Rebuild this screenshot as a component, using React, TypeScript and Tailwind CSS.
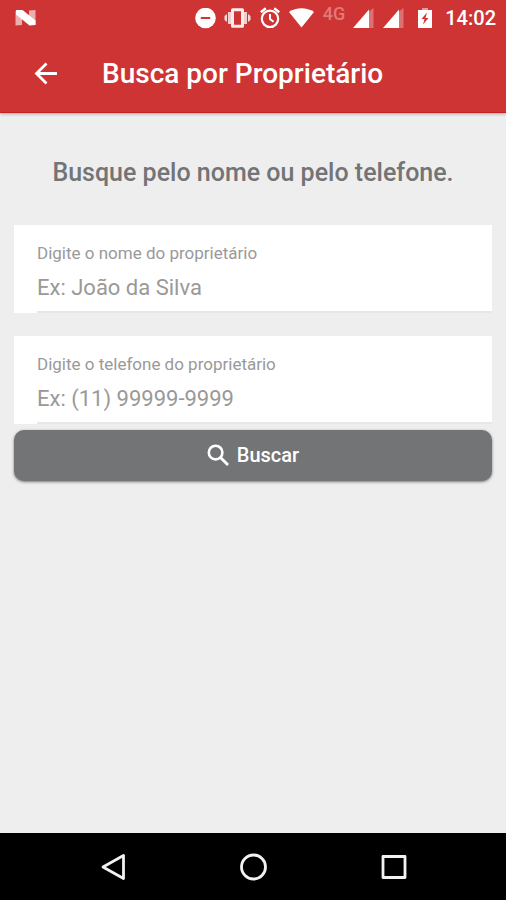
import type { ReactNode } from "react";

function StatusBar() {
  return (
    <div className="flex h-9 items-center justify-between pr-[10px] pl-[15px] text-white">
      <svg width="21" height="16" viewBox="0 0 21 16" aria-hidden="true">
        <path d="M0.5 1L7 1V15L0.5 15.5ZM14 0.5L20.5 0V15L14 13Z" fill="#fff" opacity=".6" />
        <path d="M1 0H7.5L20.5 10.5V15L14.5 15.5L1 4.5Z" fill="#fff" />
      </svg>
      <div className="flex items-center gap-2">
        <svg width="21" height="21" viewBox="0 0 21 21" aria-hidden="true">
          <circle cx="10.5" cy="10" r="10.3" fill="#fff" />
          <path d="M6.5 10H14.5" stroke="#cf3434" strokeWidth="1.8" strokeLinecap="round" />
        </svg>
        <svg width="28" height="21" viewBox="0 0 28 21" aria-hidden="true">
          <path d="M4 4H7V16H4ZM20 4H23V16H20Z" fill="#fff" opacity=".75" />
          <path d="M0.5 8L3 6V14L0.5 12ZM26.5 8L24 6V14L26.5 12Z" fill="#fff" opacity=".8" />
          <path d="M8.5 1.8H18.5V18.2H8.5Z" fill="none" stroke="#fff" strokeOpacity=".9" strokeWidth="3" strokeLinejoin="round" />
        </svg>
        <svg width="21" height="22" viewBox="0 0 21 22" fill="none" stroke="#fff" aria-hidden="true">
          <circle cx="10" cy="11.8" r="8.2" strokeWidth="2.2" />
          <path d="M10 7V12L13.5 14.8" strokeWidth="2" />
          <path d="M0.8 5.2L5.8 1.2M19.2 5.2L14.2 1.2" strokeWidth="2.4" />
        </svg>
        <svg width="26" height="20" viewBox="0 0 26 20" aria-hidden="true">
          <path d="M0 4C7.5-1 17.5-1 25 4L12.5 19.5Z" fill="#fff" />
        </svg>
        <span className="h-7 text-lg leading-5 font-medium text-[#e07a7a]">4G</span>
        <div className="mr-1 flex gap-2">
          <Signal />
          <Signal />
        </div>
        <svg width="16" height="21" viewBox="0 0 16 21" className="mr-1" aria-hidden="true">
          <path d="M5 0H11V3H5Z" fill="#fff" opacity=".5" />
          <path d="M1 2H15V20H1Z" fill="#fff" />
          <path d="M10 4.5L4.5 11H7.5L6 16.5L11.5 10H8.5Z" fill="#cf3434" />
        </svg>
        <time className="text-xl leading-6 font-medium">14:02</time>
      </div>
    </div>
  );
}

function Signal() {
  return (
    <svg width="22" height="22" viewBox="0 0 22 22" aria-hidden="true">
      <path d="M16 4.5L20.5 1V21H16Z" fill="#fff" opacity=".3" />
      <path d="M16 2.5V21H0Z" fill="#fff" />
    </svg>
  );
}

type FieldProps = { id: string; label: string; placeholder: string; type: string };

function Field({ id, label, placeholder, type }: FieldProps) {
  return (
    <div className="bg-white pt-[18px] pl-[23px]">
      <label htmlFor={id} className="block text-[17px] leading-5 text-[#999]">
        {label}
      </label>
      <input
        id={id}
        type={type}
        placeholder={placeholder}
        className="block h-[50px] w-full border-b-2 border-[#e7e7e7] bg-transparent text-[22px] text-[#777] outline-none placeholder:text-[#999]"
      />
    </div>
  );
}

function NavButton({ label, children }: { label: string; children: ReactNode }) {
  return (
    <button type="button" aria-label={label} className="flex size-7 items-center justify-center">
      <svg width="28" height="28" viewBox="0 0 28 28" fill="none" stroke="#f2f2f2" strokeWidth="2.8" strokeLinejoin="round" aria-hidden="true">
        {children}
      </svg>
    </button>
  );
}

export default function App() {
  return (
    <div className="flex min-h-screen flex-col bg-[#eee] font-['Roboto',sans-serif]">
      <header className="z-10 border-b border-[#c32222] bg-[#cf3434] shadow-[0_1px_3px_rgba(0,0,0,0.3)]">
        <StatusBar />
        <div className="flex h-[76px] items-center gap-11 pl-8 text-white">
          <button type="button" aria-label="Voltar">
            <svg width="26" height="26" viewBox="0 0 26 26" fill="none" stroke="#fff" strokeWidth="2.8" aria-hidden="true">
              <path d="M25 12.5H5M14.5 2.5L4.5 12.5L14.5 22.5" />
            </svg>
          </button>
          <h1 className="text-[28px] leading-8 font-medium">Busca por Proprietário</h1>
        </div>
      </header>

      <main className="flex-1 px-[14px] pt-11">
        <h2 className="text-center text-[25px] leading-8 font-medium text-[#727476]">
          Busque pelo nome ou pelo telefone.
        </h2>
        <form className="pt-9" onSubmit={(event) => event.preventDefault()}>
          <div className="flex flex-col gap-[23px]">
            <Field id="nome" type="text" label="Digite o nome do proprietário" placeholder="Ex: João da Silva" />
            <Field id="telefone" type="tel" label="Digite o telefone do proprietário" placeholder="Ex: (11) 99999-9999" />
          </div>
          <button
            type="submit"
            className="mt-[6px] flex h-[51px] w-full items-center justify-center gap-2 rounded-[10px] bg-[#727476] pb-[2px] text-xl font-medium text-white shadow-[0_1px_3px_rgba(0,0,0,0.5)]"
          >
            <svg width="22" height="22" viewBox="0 0 22 22" fill="none" stroke="#fff" strokeWidth="2.6" aria-hidden="true">
              <circle cx="8.6" cy="8.6" r="6.8" />
              <path d="M13.5 13.5L21 21" strokeWidth="2.8" />
            </svg>
            Buscar
          </button>
        </form>
      </main>

      <nav className="flex h-[67px] items-center justify-center gap-28 bg-black">
        <NavButton label="Voltar ao anterior">
          <path d="M24.5 2.5V25.5L4 14Z" />
        </NavButton>
        <NavButton label="Início">
          <circle cx="14.5" cy="14" r="12" />
        </NavButton>
        <NavButton label="Recentes">
          <path d="M4 3.5H26V24.5H4Z" />
        </NavButton>
      </nav>
    </div>
  );
}
